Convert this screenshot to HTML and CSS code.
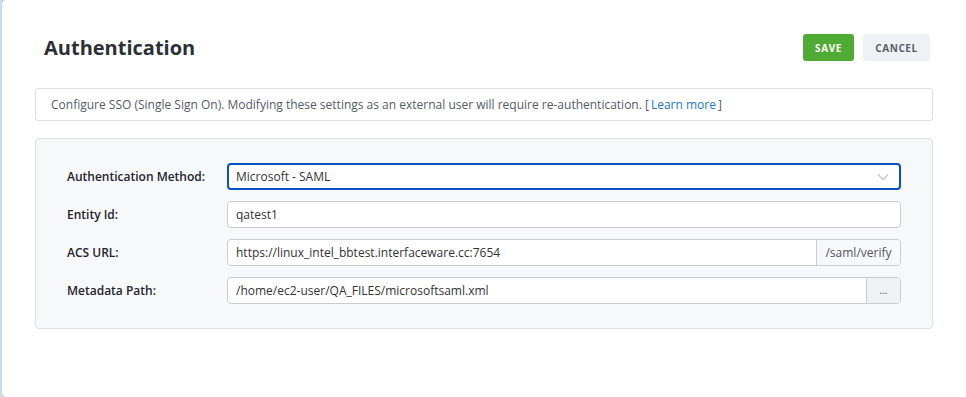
FILE: index.html
```html
<!DOCTYPE html>
<html lang="en">
<head>
    <meta charset="UTF-8">
    <title>Authentication</title>
    <link rel="stylesheet" href="styles.css">
</head>
<body>
    <div class="page">
        <div class="header">
            <h1 class="title">Authentication</h1>
            <div class="actions">
                <button class="save-button">SAVE</button>
                <button class="cancel-button">CANCEL</button>
            </div>
        </div>

        <div class="info-box">
            Configure SSO (Single Sign On). Modifying these settings as an external user will require re-authentication. [<a href="#" class="learn-more">Learn more</a>]
        </div>

        <div class="form-panel">
            <div class="form-row">
                <label class="form-label">Authentication Method:</label>
                <div class="select-field">
                    <span>Microsoft - SAML</span>
                    <svg class="chevron" width="12" height="8" viewBox="0 0 12 8"><path d="M1 1.5l5 5 5-5" fill="none" stroke="#c3c8ce" stroke-width="1.4"/></svg>
                </div>
            </div>
            <div class="form-row">
                <label class="form-label">Entity Id:</label>
                <div class="input-group">
                    <input type="text" class="text-input" value="qatest1">
                </div>
            </div>
            <div class="form-row">
                <label class="form-label">ACS URL:</label>
                <div class="input-group">
                    <input type="text" class="text-input" value="https://linux_intel_bbtest.interfaceware.cc:7654">
                    <span class="addon">/saml/verify</span>
                </div>
            </div>
            <div class="form-row">
                <label class="form-label">Metadata Path:</label>
                <div class="input-group">
                    <input type="text" class="text-input" value="/home/ec2-user/QA_FILES/microsoftsaml.xml">
                    <span class="addon addon-button">...</span>
                </div>
            </div>
        </div>
    </div>
</body>
</html>
```

FILE: styles.css
```css
/* Page frame */
body {
    margin: 0;
    padding: 0 0 0 1px;
    background-color: #c9dde6;
    font-family: "Open Sans", Arial, sans-serif;
    color: #333;
    height: 397px;
    overflow: hidden;
}

.page {
    background: #fff;
    height: 100%;
    margin-left: 1px;
    border-radius: 5px 0 0 5px;
    padding: 0 33px 0 33px;
    box-sizing: border-box;
}

.header {
    display: flex;
    align-items: center;
    justify-content: space-between;
    height: 88px;
    padding: 7px 3px 0 9px;
    box-sizing: border-box;
}

.title {
    margin: 0;
    font-size: 20px;
    font-weight: 700;
    color: #2b3036;
}

.actions {
    display: flex;
    gap: 9px;
}

.save-button, .cancel-button {
    height: 27px;
    border: none;
    border-radius: 3px;
    font-family: "Open Sans", Arial, sans-serif;
    font-size: 10px;
    font-weight: 700;
    letter-spacing: 0.6px;
    cursor: pointer;
}

.save-button {
    width: 51px;
    background-color: #4fab33;
    color: #fff;
}

.cancel-button {
    width: 67px;
    background-color: #eff2f5;
    color: #565e68;
}

/* Info line */
.info-box {
    border: 1px solid #dcdfe3;
    border-radius: 3px;
    height: 33px;
    box-sizing: border-box;
    padding: 0 15px;
    display: flex;
    align-items: center;
    font-size: 12px;
    color: #535c66;
    margin-bottom: 17px;
}

.learn-more {
    color: #1a78c2;
    text-decoration: none;
    margin: 0 2px;
}

/* Form panel */
.form-panel {
    background-color: #f7f8fa;
    border: 1px solid #dcdfe3;
    border-radius: 4px;
    padding: 24px 31px 24px 31px;
    display: flex;
    flex-direction: column;
    gap: 11px;
}

.form-row {
    display: flex;
    align-items: center;
    height: 27px;
}

.form-label {
    width: 160px;
    font-size: 12px;
    font-weight: 600;
    color: #1f252b;
}

.select-field {
    flex: 1;
    height: 27px;
    box-sizing: border-box;
    border: 2px solid #0b52c1;
    border-radius: 4px;
    background: #fff;
    display: flex;
    align-items: center;
    justify-content: space-between;
    padding: 0 10px 0 7px;
    font-size: 12px;
    color: #333;
}

.input-group {
    flex: 1;
    display: flex;
    height: 27px;
    border: 1px solid #c9cdd2;
    border-radius: 4px;
    box-sizing: border-box;
    background: #fff;
    overflow: hidden;
}

.text-input {
    flex: 1;
    border: none;
    outline: none;
    padding: 0 8px;
    font-family: "Open Sans", Arial, sans-serif;
    font-size: 12px;
    color: #333;
    background: transparent;
}

.addon {
    width: 84px;
    border-left: 1px solid #c9cdd2;
    background-color: #f7f8fa;
    color: #4f5761;
    font-size: 12px;
    display: flex;
    align-items: center;
    justify-content: center;
    box-sizing: border-box;
}

.addon-button {
    width: 34px;
    background-color: #eff2f5;
    font-size: 10px;
    padding-bottom: 2px;
}
```
